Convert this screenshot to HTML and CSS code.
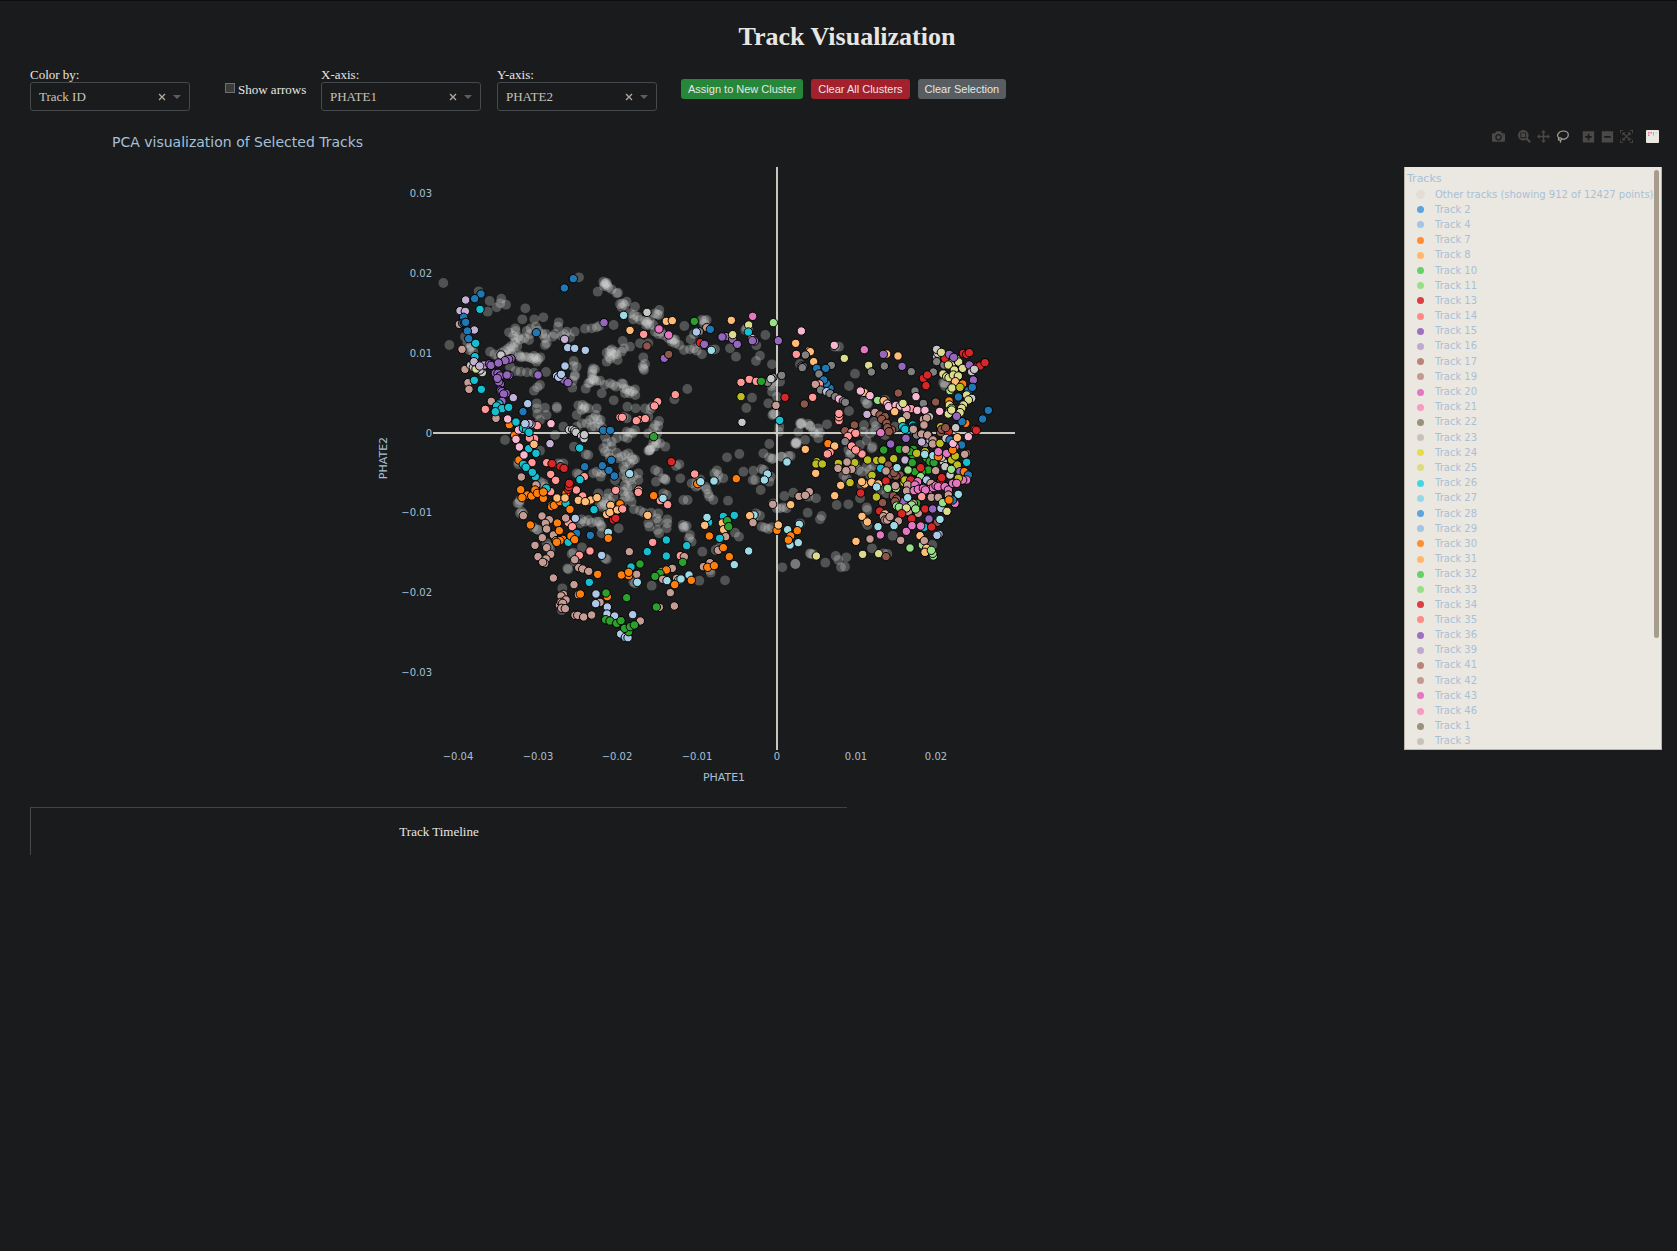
FILE: index.html
```html
<!DOCTYPE html>
<html lang="en">
<head>
<meta charset="utf-8">
<title>Track Visualization</title>
<meta name="viewport" content="width=device-width, initial-scale=1">
<link rel="stylesheet" href="styles.css">
</head>
<body>
<main class="page">
  <h1 class="page-title">Track Visualization</h1>

  <form class="controls">
    <div class="field">
      <label for="color-by">Color by:</label>
      <div class="dropdown">
        <select id="color-by"><option>Track ID</option></select>
        <button type="button" class="dropdown-clear" aria-label="Clear color"><svg viewBox="0 0 8 8"><path d="M1 1l6 6M7 1l-6 6"/></svg></button>
        <svg class="caret" viewBox="0 0 8 4"><path d="M0 0h8l-4 4z"/></svg>
      </div>
    </div>
    <div class="check">
      <input type="checkbox" id="arrows"><label for="arrows">Show arrows</label>
    </div>
    <div class="field">
      <label for="x-axis">X-axis:</label>
      <div class="dropdown">
        <select id="x-axis"><option>PHATE1</option></select>
        <button type="button" class="dropdown-clear" aria-label="Clear X-axis"><svg viewBox="0 0 8 8"><path d="M1 1l6 6M7 1l-6 6"/></svg></button>
        <svg class="caret" viewBox="0 0 8 4"><path d="M0 0h8l-4 4z"/></svg>
      </div>
    </div>
    <div class="field">
      <label for="y-axis">Y-axis:</label>
      <div class="dropdown">
        <select id="y-axis"><option>PHATE2</option></select>
        <button type="button" class="dropdown-clear" aria-label="Clear Y-axis"><svg viewBox="0 0 8 8"><path d="M1 1l6 6M7 1l-6 6"/></svg></button>
        <svg class="caret" viewBox="0 0 8 4"><path d="M0 0h8l-4 4z"/></svg>
      </div>
    </div>
    <div class="actions">
      <button type="button" class="btn btn-assign">Assign to New Cluster</button>
      <button type="button" class="btn btn-clear">Clear All Clusters</button>
      <button type="button" class="btn btn-selection">Clear Selection</button>
    </div>
  </form>

  <section class="chart">
    <header class="chart-head">
      <h2 class="chart-title">PCA visualization of Selected Tracks</h2>
      <div class="modebar">
        <div class="modebar-group">
          <button type="button" aria-label="Download plot"><svg viewBox="0 0 1000 1000"><path transform="matrix(1 0 0 -1 0 850)" d="m500 450c-83 0-150-67-150-150 0-83 67-150 150-150 83 0 150 67 150 150 0 83-67 150-150 150z m400 150h-120c-16 0-34 13-39 29l-31 93c-6 15-23 28-40 28h-340c-16 0-34-13-39-28l-31-94c-6-15-23-28-40-28h-120c-55 0-100-45-100-100v-450c0-55 45-100 100-100h800c55 0 100 45 100 100v450c0 55-45 100-100 100z m-400-550c-138 0-250 112-250 250 0 138 112 250 250 250 138 0 250-112 250-250 0-138-112-250-250-250z m365 380c-19 0-35 16-35 35 0 19 16 35 35 35 19 0 35-16 35-35 0-19-16-35-35-35z"/></svg></button>
        </div>
        <div class="modebar-group">
          <button type="button" aria-label="Zoom"><svg viewBox="0 0 1000 1000"><path transform="matrix(1 0 0 -1 0 850)" d="m1000-25l-250 251c40 63 63 138 63 218 0 224-182 406-407 406-224 0-406-182-406-406s183-406 407-406c80 0 155 22 218 62l250-250 125 125z m-812 250l0 438 437 0 0-438-437 0z m62 375l313 0 0-312-313 0 0 312z"/></svg></button>
          <button type="button" aria-label="Pan"><svg viewBox="0 0 1000 1000"><path transform="matrix(1 0 0 -1 0 850)" d="m1000 350l-187 188 0-125-250 0 0 250 125 0-188 187-187-187 125 0 0-250-250 0 0 125-188-188 186-187 0 125 252 0 0-250-125 0 187-188 188 188-125 0 0 250 250 0 0-126 187 188z"/></svg></button>
          <button type="button" class="is-active" aria-label="Lasso select"><svg viewBox="0 0 13 13"><path class="line" d="M3 8.300C-.2 5.500 2.600 1 7.300 1c3.200 0 5 1.600 5 3.900 0 2.700-3 4.500-6.300 4.300M6 9.200c-.4-1.600-3.300-1.700-3.600-.2-.2 1.200 1.700 1.800 3.600.2zM3.700 9.800c1.500.3 1.300 1.700.3 2.700"/></svg></button>
        </div>
        <div class="modebar-group">
          <button type="button" aria-label="Zoom in"><svg viewBox="-60 -30 1000 1000"><path transform="matrix(1 0 0 -1 0 850)" d="m1 787l0-875 875 0 0 875-875 0z m687-500l-187 0 0-187-125 0 0 187-188 0 0 125 188 0 0 187 125 0 0-187 187 0 0-125z"/></svg></button>
          <button type="button" aria-label="Zoom out"><svg viewBox="-60 -30 1000 1000"><path transform="matrix(1 0 0 -1 0 850)" d="m0 788l0-876 875 0 0 876-875 0z m688-500l-500 0 0 125 500 0 0-125z"/></svg></button>
          <button type="button" aria-label="Autoscale"><svg viewBox="0 0 1000 1000"><path transform="matrix(1 0 0 -1 0 850)" d="m250 850l-187 0-63 0 0-62 0-188 63 0 0 188 187 0 0 62z m688 0l-188 0 0-62 188 0 0-188 62 0 0 188 0 62-62 0z m-875-938l0 188-63 0 0-188 0-62 63 0 187 0 0 62-187 0z m875 188l0-188-188 0 0-62 188 0 62 0 0 62 0 188-62 0z m-125 188l-1 0-93-94-156 156 156 156 92-93 2 0 0 250-250 0 0-2 93-92-156-156-156 156 94 92 0 2-250 0 0-250 0 0 93 93 157-156-157-156-93 94 0 0 0-250 250 0 0 0-94 93 156 157 156-157-93-93 0 0 250 0 0 250z"/></svg></button>
        </div>
        <div class="modebar-group">
          <a href="#" aria-label="Produced with Plotly"><svg viewBox="0 0 13 13"><rect width="13" height="13" rx="1" fill="#ebe8e1"/><path d="M2 2h1.500v1.500H2zM4.500 2H6v1.500H4.500zM2 4.500h1.500V6H2z" fill="#ef6f9c"/><path d="M7 2h1v3.500H7z" fill="#b9a5b8"/><path d="M9.500 2h1.500v1.500H9.500z" fill="#bcdfe6"/></svg></a>
        </div>
      </div>
    </header>
    <div class="chart-body">
      <svg class="plot" viewBox="112 160 1224 630" role="img" aria-label="PHATE1 against PHATE2">
        <g class="zero-lines">
          <path d="M433 433h582M777 167v583"/>
        </g>
        <g id="points"></g>
        <g class="ticks y-ticks">
          <text x="432" y="197">0.03</text>
          <text x="432" y="277">0.02</text>
          <text x="432" y="357">0.01</text>
          <text x="432" y="437">0</text>
          <text x="432" y="516">−0.01</text>
          <text x="432" y="596">−0.02</text>
          <text x="432" y="676">−0.03</text>
        </g>
        <g class="ticks x-ticks">
          <text x="458" y="760">−0.04</text>
          <text x="538" y="760">−0.03</text>
          <text x="617" y="760">−0.02</text>
          <text x="697" y="760">−0.01</text>
          <text x="777" y="760">0</text>
          <text x="856" y="760">0.01</text>
          <text x="936" y="760">0.02</text>
        </g>
        <text class="axis-title" x="724" y="781">PHATE1</text>
        <text class="axis-title" transform="translate(387 458) rotate(-90)">PHATE2</text>
      </svg>
      <aside class="legend">
        <h3 class="legend-title">Tracks</h3>
        <ul class="legend-list" id="legend"></ul>
        <span class="legend-scroll"></span>
      </aside>
    </div>
  </section>

  <section class="timeline">
    <h2 class="timeline-title">Track Timeline</h2>
  </section>
</main>
<script src="plot.js"></script>
</body>
</html>
```
FILE: styles.css
```css
* { box-sizing: border-box; }

body {
  margin: 0;
  min-height: 100vh;
  background: #1a1b1c;
  border-top: 1px solid #0c0d0e;
  color: #e8e6e3;
  font: 13px/15px "Times New Roman", "Liberation Serif", serif;
}

h1, h2, h3, ul { margin: 0; padding: 0; font-weight: normal; }

button { padding: 0; border: 0; background: none; color: inherit; font: inherit; cursor: pointer; }

.page { padding: 20px 13px 0 30px; }

.page-title {
  font-size: 26px;
  line-height: 32px;
  font-weight: bold;
  text-align: center;
}

/* Controls */
.controls {
  display: flex;
  align-items: flex-start;
  gap: 16px;
  margin-top: 14px;
}

.field label { display: block; height: 15px; }

.dropdown {
  position: relative;
  display: flex;
  align-items: center;
  width: 160px;
  height: 29px;
}

.dropdown select {
  appearance: none;
  width: 100%;
  height: 100%;
  padding: 0 40px 0 8px;
  border: 1px solid #45494c;
  border-radius: 3px;
  background: transparent;
  color: #c8c3ba;
  font: inherit;
}

.dropdown-clear {
  position: absolute;
  right: 24px;
  width: 8px;
  height: 8px;
}

.dropdown-clear svg {
  display: block;
  fill: none;
  stroke: #b0a89b;
  stroke-width: 1.400;
}

.caret {
  position: absolute;
  right: 9px;
  width: 8px;
  height: 4px;
  fill: #5c5e5f;
}

.check {
  display: flex;
  gap: 3px;
  width: 80px;
  margin: 15px 0 0 19px;
}

.check input {
  appearance: none;
  flex: none;
  width: 10px;
  height: 10px;
  margin: 1px 0 0;
  border: 1px solid #6d6f70;
  background: #3b3b3b;
}

.check label { white-space: nowrap; }

.actions {
  display: flex;
  gap: 8px;
  margin: 12px 0 0 8px;
}

.btn {
  height: 20px;
  padding: 0 7px;
  border-radius: 3px;
  font: 11px/20px Arial, "Liberation Sans", sans-serif;
  white-space: nowrap;
}

.btn-assign { background: #26873b; }
.btn-clear { background: #a3202d; }
.btn-selection { background: #575d60; }

/* Scatter chart */
.chart {
  margin-top: 16px;
  color: #a5c0d8;
  font-family: Verdana, "DejaVu Sans", sans-serif;
}

.chart-head {
  display: flex;
  justify-content: space-between;
  align-items: flex-start;
  height: 33px;
  padding: 3px 5px 0 82px;
}

.chart-title { font-size: 14px; line-height: 24px; }

.modebar { display: flex; gap: 13px; }
.modebar-group { display: flex; gap: 6px; }

.modebar-group > * { width: 13px; height: 13px; }

.modebar svg {
  display: block;
  width: 13px;
  height: 13px;
  fill: #4b4846;
}

.modebar .line {
  fill: none;
  stroke: #a8a196;
  stroke-width: 1.200;
}

.chart-body {
  display: grid;
  grid-template-columns: 1fr 258px;
  column-gap: 68px;
  align-items: start;
  padding: 0 2px 0 82px;
}

.plot { display: block; width: 100%; }

.zero-lines { fill: none; stroke: #e8e3da; stroke-width: 2; stroke-opacity: 0.85; }

.ticks, .axis-title { fill: #a5c0d8; }
.ticks { font-size: 10px; }
.x-ticks, .axis-title { text-anchor: middle; }
.y-ticks { text-anchor: end; }
.axis-title { font-size: 11px; }

.other { fill: #d8d8d8; fill-opacity: 0.29; }
.track { stroke: #000; stroke-width: 1; }

/* Legend */
.legend {
  position: relative;
  display: flex;
  flex-direction: column;
  height: 583px;
  margin-top: 7px;
  border: 1px solid #b9b6a9;
  border-top: 0;
  background: #ebe8e1;
  color: #a8c0d6;
}

.legend-title { padding: 4px 0 0 2px; font-size: 11px; line-height: 16px; }

.legend-list {
  flex: 1;
  display: grid;
  grid-auto-rows: 1fr;
  list-style: none;
  font-size: 10px;
}

.legend-list li {
  display: grid;
  grid-template-columns: 30px 1fr;
  align-items: center;
  line-height: 14px;
  white-space: nowrap;
}

.dot {
  justify-self: center;
  width: 7px;
  height: 7px;
  border-radius: 50%;
}

.legend-list li:first-child .dot { width: 9px; height: 9px; }

.legend-scroll {
  position: absolute;
  top: 3px;
  right: 2px;
  width: 5px;
  height: 468px;
  border-radius: 3px;
  background: #a69d8f;
}

/* Timeline */
.timeline {
  width: 50%;
  height: 48px;
  margin-top: 17px;
  padding-top: 16px;
  border-top: 1px solid #134a94;
  border-left: 1px solid #45494c;
}

.timeline-title { font-size: 13px; line-height: 15px; text-align: center; }
```
FILE: plot.js
```js
const colors = {
  a: '#1f77b4', b: '#aec7e8', c: '#ff7f0e', d: '#ffbb78', e: '#2ca02c',
  f: '#98df8a', g: '#d62728', h: '#ff9896', i: '#9467bd', j: '#c5b0d5',
  k: '#8c564b', l: '#c49c94', m: '#e377c2', n: '#f7b6d2', o: '#7f7f7f',
  p: '#c7c7c7', q: '#bcbd22', r: '#dbdb8d', s: '#17becf', t: '#9edae5'
};

// Each tile holds points as thirds of a unit from its origin, grouped by colour key.
const tiles = [
  {
    x: 430, y: 260,
    other: '40,69 447,52 146,94 179,123 173,155 214,116 211,130 228,134 200,142 286,145 340,172 313,178 277,178 386,187 384,200 256,205 257,213 237,217 250,228 257,235 265,231 272,238 290,213 300,222 283,235 297,240 302,205 318,200 325,212 337,222 345,235 350,250 348,222 368,230 375,222 395,228 403,222 410,215 420,232 434,215 465,206 485,205 500,202 508,198 551,195 503,95 520,65 527,70 522,78 531,75 535,82 524,72 530,68 545,88 560,100 58,255 105,230 120,262 118,270 125,258 130,275 112,250 180,275 193,283 205,290 215,278 225,272 235,265 243,258 250,262 240,272 230,285 245,280 222,292 262,258 255,248 268,285 275,292 285,290 295,292 303,294 310,297 318,293 325,298 331,292 312,288 320,305 270,290 345,255 257,333 272,335 291,337 312,338 348,336 240,320 330,375 322,382 312,392 431,303 429,318 435,345 434,349 428,362 427,383 440,320 489,325 487,332 495,328 486,342 490,355 484,358 492,360 499,363 480,368 475,370 510,362 467,386 515,400 551,421 524,374 540,370 550,375 558,380 530,278 540,273 545,280 550,285 538,290 545,268 556,275 560,283 530,305 563,300 541,296 320,430 380,440 381,445 345,443 350,465 322,462 320,445 445,436 458,435 465,440 462,446 455,450 475,445 440,465 455,490 500,445 497,465 503,478 490,475 480,480 505,490 512,480 515,500 485,500 470,490 495,500 225,540 400,500 440,500 330,480 375,525 530,550 525,530 545,545 520,565 560,535 545,560',
    tracks: 'a:430,56 403,84 153,102 134,116 319,218|j:107,120 90,152 106,154 133,210|s:150,148|l:88,193 96,268 105,328 114,368 117,388 184,424 198,475|a:101,172 98,190 104,189 107,187 112,213 116,236|s:137,250 135,290 133,361 154,388|p:122,316 130,322 213,285 157,338 150,330|r:138,327|j:132,305 162,315 149,318|i:178,312 183,316 243,296 236,298 225,302 205,309 196,340 204,340 210,348 237,346 231,345 211,372 206,365 202,355 212,392 216,395 228,400 221,402 216,424 324,345 522,188 402,360 414,368|j:404,238 250,413|b:413,263 434,265 466,271 405,318 380,348 386,352 394,343 293,431|a:279,455 520,511 541,511|s:207,432 200,438 216,446 236,442 196,455|h:166,448 322,497 314,536 298,534|n:363,491|c:238,494 254,526|n:233,477 266,510 258,538 268,561|j:303,492 297,490|s:258,486 280,505 290,510 297,517 296,566 449,564|b:285,491|d:312,553|j:360,551|p:418,509 428,508 434,512 438,517 455,528 462,536 463,524|h:570,472'
  },
  {
    x: 620, y: 260,
    other: '8,130 14,135 5,142 0,132 20,125 -6,98 45,140 30,160 42,165 52,170 40,178 60,180 75,182 80,185 82,190 88,195 78,195 90,178 105,160 112,163 117,165 118,150 100,195 105,215 115,222 122,215 130,225 145,235 155,238 160,240 155,245 165,238 193,198 212,238 192,270 210,268 222,265 230,272 246,283 240,250 245,180 253,182 260,180 253,192 285,268 275,270 235,215 222,222 330,265 348,290 380,205 376,210 385,210 436,225 409,256 420,287 408,303 456,313 8,243 5,275 30,260 12,265 60,250 70,292 75,312 70,325 72,330 68,318 178,255 165,250 85,250 5,370 12,385 20,388 30,392 38,395 45,388 28,400 15,400 46,405 10,372 202,387 163,418 22,440 47,445 75,445 97,440 92,447 85,470 20,475 10,470 117,483 105,495 115,497 100,505 20,515 30,518 38,520 45,510 12,530 22,535 100,548 108,540 110,550 105,560 95,562 90,568 88,572 120,550 136,560 112,520 85,520 458,370 455,378 460,365 456,395 480,365 396,413 379,444 445,430 460,462 457,465 465,462 478,500 477,515 471,410 448,552 545,488 542,492 570,498 530,545 528,550 555,540 540,312',
    tracks: 't:11,166 274,271|p:81,157|d:30,211 139,184 157,182 334,181 527,250 568,272|h:71,223|m:117,207 146,225 398,169|k:81,258|i:133,295|k:146,283|g:241,248|i:253,253|e:223,184|l:260,203|o:238,215|b:229,216|a:271,208|i:318,230 306,231 338,238 352,253|r:338,224 386,195|d:396,235|s:385,216|i:404,243 397,242 475,242|f:460,188|n:544,213|h:529,283|o:556,286 546,318 551,320 547,323 485,346|h:363,367 388,358 409,364|o:443,367 459,352|p:453,356|e:424,364|q:363,410|g:495,412|l:468,436|s:479,481|k:553,432|p:366,487|h:166,404 113,425 103,438 7,472 58,478 49,482 76,476|e:101,530|d:556,568'
  },
  {
    x: 430, y: 430,
    other: '330,62 467,73 475,75 432,50 525,65 535,70 560,68 540,82 565,85 385,100 390,105 400,100 265,95 265,103 447,133 440,130 490,130 500,125 515,128 512,140 525,120 555,150 330,155 340,160 345,170 530,205 520,215 525,225 515,230 535,230 510,222 505,190 535,190 550,200 540,215 560,180 270,210 263,220 268,218 275,245 280,252 270,250 450,280 465,275 475,270 485,278 455,268 500,275 512,285 508,275 515,290 515,310 320,298 325,300 310,292 350,340 355,350 360,358 430,368 425,372 456,352 525,385 530,388 412,415 415,418 397,475 435,395 395,540',
    tracks: 'c:267,90|n:282,75|h:306,98|s:318,70 280,103 288,112 316,140 307,127|h:350,98|g:366,101|h:362,133 377,151|g:392,110 402,115|h:463,140|s:450,149|a:464,110 517,107 544,91 537,121 553,138|l:274,141 318,165|c:272,179|h:362,185|s:349,175|c:292,195 305,198 315,180 322,190 340,205 340,186 276,203 365,225 378,218 365,230 373,226 390,215 408,190|h:439,180|g:415,178 417,170 418,160|h:458,198|s:408,220|d:381,204 405,204 445,211 475,214 482,210 466,215 501,203|c:420,238|h:557,181|s:492,239|d:542,226 530,253 540,247|c:570,222|d:562,240|g:550,270 557,265|t:535,307|c:535,325 301,285|l:280,257 336,258 358,269 346,280 350,297 337,323 370,315 315,346 350,353 362,373 324,380 348,387 344,400 338,397|h:415,278 427,290|l:407,264|b:436,265|c:382,279 388,302 398,328 378,332 390,332|a:440,310 481,316|s:415,337|c:423,318 434,329 380,337|h:480,363 448,376|l:434,389 446,413 458,417 476,424 370,444 432,464 445,494|b:515,376|c:503,433|s:478,457|c:451,492|b:498,492|l:510,517|b:497,521 532,531 531,552 554,558|c:532,500|e:528,489|l:400,493 393,498 408,510 388,525 393,517 398,520 395,535 406,536 435,556 443,556 461,561 485,555|e:527,569 540,573 560,580'
  },
  {
    x: 620, y: 430,
    other: '5,80 15,75 25,70 35,82 20,95 30,100 10,110 40,90 15,120 10,135 20,145 30,150 40,138 15,165 22,175 35,165 10,185 25,190 15,200 8,215 30,200 55,150 35,215 45,88 55,130 90,60 85,62 321,82 358,72 430,70 447,82 456,87 485,80 505,78 525,40 178,103 168,108 105,120 115,125 130,145 135,147 137,150 108,155 181,145 291,121 295,135 310,145 283,130 290,150 215,160 230,155 235,165 240,148 228,170 256,170 260,178 265,192 268,200 280,210 324,212 203,210 190,210 370,125 400,122 425,117 398,150 406,150 432,120 452,140 422,180 448,155 130,190 140,195 42,238 60,242 72,248 93,248 115,250 110,265 115,275 85,280 88,290 142,268 142,280 140,295 112,300 117,310 188,285 193,290 200,288 190,293 210,315 207,325 215,335 -4,295 247,365 345,308 357,320 425,290 435,293 445,297 455,292 408,250 420,257 400,265 480,235 490,232 460,220 500,235 95,467 238,452 272,428 315,451 526,402 287,360 300,352 40,455 270,420 45,460 570,370',
    tracks: 'g:154,95|t:29,131|h:56,180 55,187|c:101,197|h:121,212|t:129,205|h:143,224 8,237|h:224,132|c:233,161|t:242,155 282,153|c:349,146|t:442,132 433,150 501,96|l:458,223|d:512,224|l:537,199 556,195 567,183|d:83,256|s:266,277|t:261,262|d:254,286|s:310,259 343,256|d:307,279 311,299|e:322,272 326,290|t:402,255|d:389,257|l:399,278|c:268,318|l:317,320|s:299,325|h:98,337|s:139,330 200,347 82,365 139,378|l:28,365 295,361|c:310,353 328,380|t:386,363 343,404|h:181,377|l:193,380|e:188,397 60,402|s:33,411|l:50,433|c:26,437 4,435 26,427|t:52,457|l:125,424 157,415|c:139,420|e:120,430 105,439|l:128,448 170,445|t:141,452 207,435 176,451 183,447|c:164,464 214,451|l:250,410 270,398|c:263,412 283,407 471,301|d:475,285|t:538,283 503,299|c:532,302|t:510,345|c:512,318 505,330|t:535,338|e:20,503|l:151,488 163,528 118,532|e:109,531|b:38,554|l:61,573|e:3,572|b:2,612 16,622 24,623|e:26,605 14,595 31,590 43,585'
  },
  {
    x: 770, y: 300,
    other: '195,140 207,140 237,258 255,221 237,333 293,312 290,310 285,300 90,370 95,372 120,378 145,385 171,373 150,398 130,395 85,395 282,375 313,365 318,378 315,390 525,250 525,258 520,248 540,235 385,320 375,380 355,385 280,395 345,300 300,400',
    tracks: 'n:193,136|o:184,196|d:121,155 131,185|o:106,165|a:140,205 167,205|o:147,222|a:180,265 169,250 161,240|h:148,252|l:136,253|o:152,270|b:170,275|o:180,281 196,290|n:208,297|o:220,303 226,307|h:128,292|m:283,149|r:223,175 296,196|o:304,216 343,198 424,215 490,216 435,273 460,310|d:350,162|i:340,163 396,199|d:384,168|g:460,235 472,225 468,257|d:282,277|n:271,273 300,287|f:323,301|d:342,302|n:352,312 356,320 378,316 391,318|h:423,326|n:408,326|k:385,279|n:438,290 442,331 465,331|r:399,310|d:374,335|k:497,306|n:509,334|j:291,343|l:315,337|k:330,345 345,350 335,358 350,370 365,390 352,383 357,395|h:207,362 207,350 207,340|k:253,375 225,392|h:245,397 257,400 234,409|m:332,398|l:410,347|r:395,362|s:405,382 428,375 415,390 430,382|p:478,350|l:432,388 460,358 470,354 462,375|p:500,170 503,160 500,148|o:500,185 522,195|g:525,175|r:514,157|g:580,160 590,163 598,158|r:545,190 560,178 566,186|i:538,163 551,172|r:535,195 553,210 578,205 519,222 530,230 537,233 550,225 565,228|d:556,245|i:598,195|g:622,200 630,198 645,188|p:605,215 613,208|i:610,240|c:578,252|f:540,272|r:546,264|q:570,262|a:595,272 607,262 565,291|c:537,303|r:590,285|p:605,295|r:595,300 580,315 575,325 538,315 545,325 538,335 535,342 545,330 570,338|c:587,370|a:576,365 638,357 655,331|i:560,349|g:615,388 619,391 535,390|p:557,383|q:512,380|k:527,384 512,398'
  },
  {
    x: 770, y: 420,
    other: '115,12 135,40 78,68 80,72 62,108 35,110 10,115 145,55 235,90 243,98 250,85 308,80 305,85 240,105 290,62 270,75 265,150 275,155 290,140 300,150 220,165 230,175 300,165 255,130 70,218 43,228 115,230 138,235 200,255 235,253 270,235 290,262 292,270 288,305 292,315 310,135 275,195 113,278 155,288 150,298 90,310 368,347 306,385 123,402 130,403 166,428 197,408 205,420 229,412 213,442 225,440 37,442 76,432 340,400 352,402 487,375 350,220 330,210 20,265 345,45',
    tracks: 'd:106,88|c:174,71|d:194,78|o:225,65|h:180,97 172,102 245,78 265,95 276,102 257,90|i:362,72|e:341,90|q:140,125 138,132 157,132 205,130 254,128 293,120 320,121 336,120 371,116 306,166 240,188 319,231|l:231,126 204,145 245,148 228,152|d:137,160 194,227 212,196 284,192 275,185 305,187 325,192|g:272,219 348,183|l:118,215 87,229 106,226|s:332,145|k:355,135 370,150 365,165 390,165 378,168 372,158|l:348,153|t:320,201 381,143|i:408,55|o:440,45 465,72|s:398,20 405,28 430,25|p:475,45 480,60|l:430,28 455,42 473,45 489,60 488,72|j:455,66 405,120|e:388,88 412,90 430,88 428,105 427,128 420,95|l:407,88|q:402,188 405,180 440,100 465,95 510,70 545,120 550,95 556,108 562,135|e:470,115 480,125 492,128 475,150 455,155 435,155|f:414,150 452,170|t:464,103 489,107|g:535,35 452,143 422,180 512,185 515,173|b:470,180|k:515,28 527,23 590,100|p:528,55 520,125 540,165 525,140 515,112|c:505,110|a:540,60 575,75|m:530,100 505,95 555,80|c:548,90|p:557,23|n:595,50 549,70|d:562,53|l:584,103|s:590,127|i:570,155|f:544,148|c:583,155|a:595,165|m:590,180 578,180|q:565,175|l:483,190 497,152 413,195 410,213|m:443,185 435,195 432,212 445,208 460,205 480,208 466,210 490,203 498,197 505,200 525,200 535,210 548,190 560,190|l:484,232 505,232 535,225|f:378,205 353,205|l:376,197|i:400,245|t:413,233 565,223|k:338,248 370,228 380,237 375,245|e:440,250|l:415,275 430,250 445,280|f:380,258 388,262 425,255 437,267|r:409,264|h:455,230|m:555,250|g:465,267 395,281 329,273|i:488,267 477,297|b:513,265|f:518,248|a:548,240|c:537,240|r:531,274|d:276,289 292,306|k:502,307|t:510,298|d:345,282|l:340,290 345,300 352,300 360,290 385,303|g:425,296|t:324,320 372,317|s:463,322|g:485,321|m:331,345 409,334 426,317 452,318|l:300,357 392,361|d:258,364 450,347|f:457,375|l:463,362|d:470,385 465,397|f:420,384 490,408 488,400 484,391|b:507,343 501,346|r:139,408 278,403 326,401|k:348,410'
  }
];

const NS = 'http://www.w3.org/2000/svg';
const layer = document.getElementById('points');

function addPoint(tile, pair, radius, name, fill) {
  const [px, py] = pair.split(',').map(Number);
  const dot = document.createElementNS(NS, 'circle');
  dot.setAttribute('cx', tile.x + px / 3);
  dot.setAttribute('cy', tile.y + py / 3);
  dot.setAttribute('r', radius);
  dot.setAttribute('class', name);
  if (fill) dot.setAttribute('fill', fill);
  layer.appendChild(dot);
}

tiles.forEach(tile => tile.other.split(' ').forEach(p => addPoint(tile, p, 4.9, 'other')));
tiles.forEach(tile => tile.tracks.split('|').forEach(group => {
  const [key, pts] = group.split(':');
  pts.split(' ').forEach(p => addPoint(tile, p, 4.2, 'track', colors[key]));
}));

const legendColors = ['#5ba5dc', '#a3c4e5', '#ff8f2e', '#ffb870', '#66d166', '#98df8a', '#d94040', '#ff8a86',
  '#9c72c0', '#c0a8d2', '#b9857b', '#c49a90', '#e377c2', '#f79cc0', '#999080', '#c9c2b8', '#e5dd4e', '#dbdb80',
  '#44d5e5', '#95d9e6'];
const trackIds = [2, 4, 7, 8, 10, 11, 13, 14, 15, 16, 17, 19, 20, 21, 22, 23, 24, 25, 26, 27, 28, 29, 30, 31, 32,
  33, 34, 35, 36, 39, 41, 42, 43, 46, 1, 3];
const list = document.getElementById('legend');

function addEntry(text, color) {
  const item = document.createElement('li');
  const dot = document.createElement('span');
  dot.className = 'dot';
  dot.style.background = color;
  item.append(dot, text);
  list.appendChild(item);
}

addEntry('Other tracks (showing 912 of 12427 points)', '#e2ddd6');
trackIds.forEach((id, n) => addEntry('Track ' + id, legendColors[n % legendColors.length]));
```
